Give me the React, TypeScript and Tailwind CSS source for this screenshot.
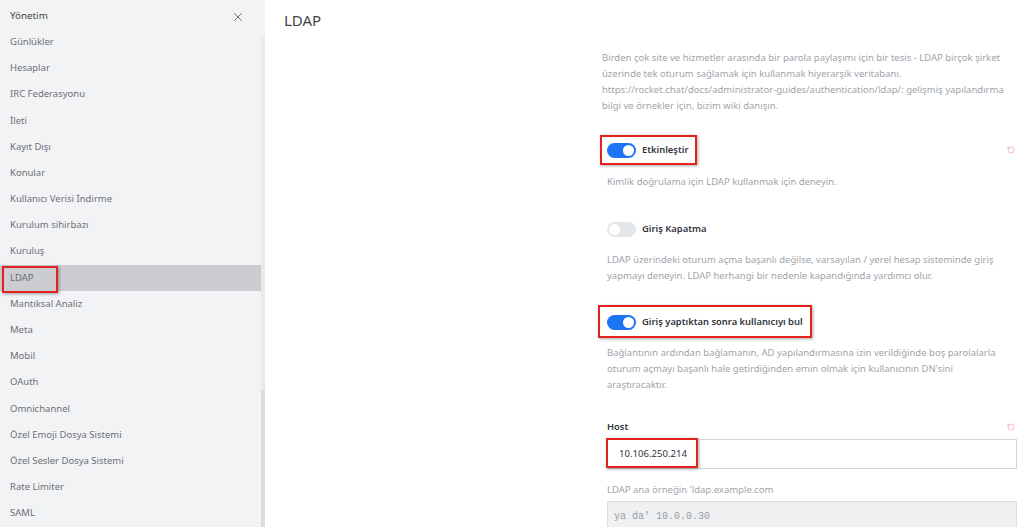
import { X, RotateCcw } from 'lucide-react';

const menu = [
  'Günlükler',
  'Hesaplar',
  'IRC Federasyonu',
  'İleti',
  'Kayıt Dışı',
  'Konular',
  'Kullanıcı Verisi İndirme',
  'Kurulum sihirbazı',
  'Kuruluş',
  'LDAP',
  'Mantıksal Analiz',
  'Meta',
  'Mobil',
  'OAuth',
  'Omnichannel',
  'Özel Emoji Dosya Sistemi',
  'Özel Sesler Dosya Sistemi',
  'Rate Limiter',
  'SAML',
];

const font = { fontFamily: '"Noto Sans", "Open Sans", sans-serif' };

function Toggle({ on }: { on: boolean }) {
  return (
    <span
      className={`relative inline-block w-[29px] h-[15px] rounded-full shrink-0 ${
        on ? 'bg-[#1d74f5]' : 'bg-[#e4e7ea]'
      }`}
    >
      <span
        className={`absolute top-[2px] w-[11px] h-[11px] rounded-full bg-white ${
          on ? 'right-[2px]' : 'left-[2px]'
        }`}
      />
    </span>
  );
}

function RedBox({ className }: { className: string }) {
  return (
    <span
      className={`absolute border-2 border-[#e3211d] shadow-[1px_1px_3px_rgba(0,0,0,0.35)] pointer-events-none ${className}`}
    />
  );
}

function Sidebar() {
  return (
    <aside className="w-[265px] shrink-0 h-[527px] bg-[#f2f3f5] flex overflow-hidden">
      <div className="flex-1">
        <div className="h-[29px] pt-[4px] flex items-center justify-between pl-[10px] pr-[16px]">
          <span className="text-[9.8px] text-[#444]">Yönetim</span>
          <X size={14} strokeWidth={1.4} className="text-[#555]" />
        </div>
        <ul>
          {menu.map((m) => (
            <li
              key={m}
              className={`relative h-[26.2px] flex items-center pl-[10px] text-[9.5px] text-[#6c7078] ${
                m === 'LDAP' ? 'bg-[#cbcdd0]' : ''
              }`}
            >
              {m}
              {m === 'LDAP' && <RedBox className="left-[2px] top-[1px] w-[56px] h-[27px]" />}
            </li>
          ))}
        </ul>
      </div>
      <div className="w-[4px] flex flex-col pt-[37px]">
        <div className="flex-1 bg-[#e9eaec] flex flex-col justify-end">
          <div className="h-[137px] bg-[#dadbdd]" />
        </div>
      </div>
    </aside>
  );
}

export default function App() {
  return (
    <div className="flex w-[1024px] h-[527px] overflow-hidden bg-white" style={font}>
      <Sidebar />
      <main className="flex-1 flex flex-col">
        <header className="h-[41px] shrink-0 flex items-center pl-[19px]">
          <h1 className="text-[15px] text-[#3f4247]">LDAP</h1>
        </header>
        <div className="ml-[337px] mt-[9px] w-[415px]">
          <p className="w-[405px] text-[9.5px] leading-[16px] text-[#a0a4aa]">
            Birden çok site ve hizmetler arasında bir parola paylaşımı için bir tesis - LDAP birçok şirket
            üzerinde tek oturum sağlamak için kullanmak hiyerarşik veritabanı.
            https://rocket.chat/docs/administrator-guides/authentication/ldap/: gelişmiş yapılandırma bilgi
            ve örnekler için, bizim wiki danışın.
          </p>

          <div className="ml-[5px] w-[410px]">
            <div className="relative mt-[28px] h-[16px] flex items-center">
              <Toggle on />
              <span className="ml-[6px] text-[9.4px] font-semibold text-[#2f343d]">Etkinleştir</span>
              <RotateCcw size={8} strokeWidth={2} className="ml-auto mr-[2px] text-[#f39aa3]" />
              <RedBox className="-left-[7px] -top-[7px] w-[97px] h-[30px]" />
            </div>
            <p className="mt-[16px] w-[395px] text-[9.5px] leading-[16px] text-[#a0a4aa]">
              Kimlik doğrulama için LDAP kullanmak için deneyin.
            </p>

            <div className="relative mt-[31px] h-[16px] flex items-center">
              <Toggle on={false} />
              <span className="ml-[6px] text-[9.4px] font-semibold text-[#2f343d]">Giriş Kapatma</span>
            </div>
            <p className="mt-[15px] w-[395px] text-[9.5px] leading-[16px] text-[#a0a4aa]">
              LDAP üzerindeki oturum açma başanlı değilse, varsayılan / yerel hesap sisteminde giriş
              yapmayı deneyin. LDAP herhangi bir nedenle kapandığında yardımcı olur.
            </p>

            <div className="relative mt-[30px] h-[16px] flex items-center">
              <Toggle on />
              <span className="ml-[6px] text-[9.4px] font-semibold text-[#2f343d]">
                Giriş yaptıktan sonra kullanıcıyı bul
              </span>
              <RedBox className="-left-[9px] -top-[9px] w-[214px] h-[33px]" />
            </div>
            <p className="mt-[15px] w-[395px] text-[9.5px] leading-[16px] text-[#a0a4aa]">
              Bağlantının ardından bağlamanın, AD yapılandırmasına izin verildiğinde boş parolalarla
              oturum açmayı başanlı hale getirdiğinden emin olmak için kullanıcının DN'sini
              araştıracaktır.
            </p>

            <div className="mt-[26px] h-[16px] flex items-center">
              <span className="text-[9.4px] font-semibold text-[#2f343d]">Host</span>
              <RotateCcw size={8} strokeWidth={2} className="ml-auto mr-[2px] text-[#f39aa3]" />
            </div>
            <div className="relative mt-[4px] h-[30px] border border-[#d3d6d9] bg-white flex items-center pl-[11px]">
              <span className="text-[9.6px] text-[#2f343d]">10.106.250.214</span>
              <RedBox className="-left-[2px] -top-[2px] w-[92px] h-[30px]" />
            </div>
            <p className="mt-[13px] text-[9.5px] leading-[16px] text-[#a0a4aa]">
              LDAP ana örneğin 'ldap.example.com
            </p>
            <div className="mt-[3px] h-[30px] border border-[#dcdee1] bg-[#eef0f2] flex items-center pl-[6px]">
              <span
                className="text-[10px] text-[#9a9ea4]"
                style={{ fontFamily: '"Liberation Mono", "DejaVu Sans Mono", monospace' }}
              >
                ya da' 10.0.0.30
              </span>
            </div>
          </div>
        </div>
      </main>
    </div>
  );
}
